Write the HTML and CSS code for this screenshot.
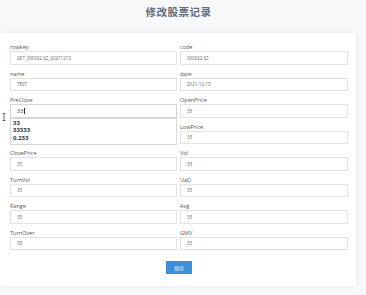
FILE: index.html
```html
<!DOCTYPE html>
<html lang="zh-CN">
  <head>
    <meta charset="UTF-8" />
    <title>修改股票记录</title>
    <link rel="stylesheet" href="styles.css">
  </head>
  <body>
    <h1 class="page-title">修改股票记录</h1>

    <div class="card">
      <form class="record-form">
        <div class="field">
          <label>rowkey</label>
          <input type="text" value="287_000022.SZ_20211213" />
        </div>
        <div class="field">
          <label>code</label>
          <input type="text" value="000022.SZ" />
        </div>
        <div class="field">
          <label>name</label>
          <input type="text" value="TEST" />
        </div>
        <div class="field">
          <label>date</label>
          <input type="text" value="2021-12-13" />
        </div>
        <div class="field">
          <label>PreClose</label>
          <div class="input-wrap">
            <div class="fake-input focused">33<span class="caret"></span></div>
            <ul class="suggest">
              <li>33</li>
              <li>33333</li>
              <li>0.233</li>
            </ul>
          </div>
          <svg class="ibeam" width="4" height="8" viewBox="0 0 4 8">
            <path d="M0.5 0.5h3M2 0.5v7M0.5 7.5h3" stroke="#444" stroke-width="0.8" fill="none" />
          </svg>
        </div>
        <div class="field">
          <label>OpenPrice</label>
          <input type="text" value="33" />
        </div>
        <!-- covered by the suggestion list -->
        <div class="field">
          <label>&nbsp;</label>
          <input type="text" value="" />
        </div>
        <div class="field">
          <label>LowPrice</label>
          <input type="text" value="33" />
        </div>
        <div class="field">
          <label>ClosePrice</label>
          <input type="text" value="33" />
        </div>
        <div class="field">
          <label>Vol</label>
          <input type="text" value="33" />
        </div>
        <div class="field">
          <label>TurnVol</label>
          <input type="text" value="33" />
        </div>
        <div class="field">
          <label>UaD</label>
          <input type="text" value="33" />
        </div>
        <div class="field">
          <label>Range</label>
          <input type="text" value="33" />
        </div>
        <div class="field">
          <label>Avg</label>
          <input type="text" value="33" />
        </div>
        <div class="field">
          <label>TurnOver</label>
          <input type="text" value="33" />
        </div>
        <div class="field">
          <label>GMV</label>
          <input type="text" value="33" />
        </div>
      </form>

      <div class="actions">
        <button type="button" class="save-btn">保存</button>
      </div>
    </div>
  </body>
</html>
```

FILE: styles.css
```css
* {
  margin: 0;
  padding: 0;
  box-sizing: border-box;
}

body {
  background-color: #f7f8f9;
  font-family: "Open Sans", "Noto Sans CJK SC", sans-serif;
  color: #444;
  width: 366px;
  height: 295px;
  overflow: hidden;
}

.page-title {
  width: 357px;
  height: 33px;
  padding-top: 5px;
  text-align: center;
  font-size: 10.5px;
  line-height: 14px;
  font-weight: bold;
  color: #5f6e80;
  letter-spacing: 0.5px;
}

.card {
  width: 356px;
  background-color: #ffffff;
  box-shadow: 0 0 5px rgba(0, 0, 0, 0.06);
  padding: 10px 8px 12px 10px;
}

.record-form {
  display: grid;
  grid-template-columns: 167px 168px;
  column-gap: 3px;
  row-gap: 5px;
}

.field {
  position: relative;
  display: flex;
  flex-direction: column;
}

.field label {
  font-size: 5.5px;
  line-height: 8px;
  color: #555;
}

.field input,
.fake-input {
  height: 13.5px;
  border: 1px solid #e2e2e2;
  padding-left: 6px;
  font-family: "Open Sans", sans-serif;
  font-size: 4.5px;
  color: #666;
  background: #fff;
  outline: none;
}

.fake-input {
  display: flex;
  align-items: center;
  font-size: 5.5px;
  color: #333;
}

.fake-input.focused {
  border-color: #d4d4d4;
}

.caret {
  display: inline-block;
  width: 0.6px;
  height: 6px;
  margin-left: 0.5px;
  background: #333;
}

.input-wrap {
  position: relative;
}

.suggest {
  position: absolute;
  left: 0;
  right: 0;
  top: 13.5px;
  list-style: none;
  background: #fff;
  border: 1px solid #d8d8d8;
  padding: 1px 2px 2px;
  z-index: 2;
}

.suggest li {
  font-size: 6px;
  line-height: 7.6px;
  font-weight: bold;
  color: #333;
}

.ibeam {
  position: absolute;
  left: -8px;
  top: 17px;
}

.actions {
  display: flex;
  justify-content: center;
  padding-top: 11px;
}

.save-btn {
  width: 26px;
  height: 13px;
  border: none;
  background-color: #3d8fd9;
  color: #fff;
  font-family: "Noto Sans CJK SC", sans-serif;
  font-size: 5px;
}
```
